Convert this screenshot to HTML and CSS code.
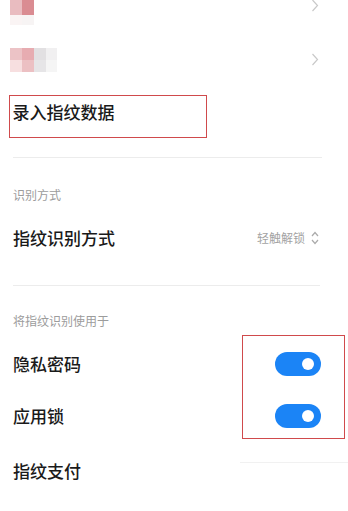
FILE: index.html
```html
<!DOCTYPE html>
<html lang="zh">
<head>
<meta charset="utf-8">
<link rel="stylesheet" href="styles.css">
</head>
<body>
<div class="page">
  <div class="row row--first">
    <div class="mosaic mosaic--a">
      <span class="c a1"></span><span class="c a2"></span>
      <span class="c a3"></span><span class="c a4"></span>
    </div>
    <svg class="chev chev--top" width="8" height="13" viewBox="0 0 8 13"><path d="M1.5 1 L6.5 6.5 L1.5 12" fill="none" stroke="#c9c9c9" stroke-width="1.2"/></svg>
  </div>
  <div class="row row--blur">
    <div class="mosaic mosaic--b">
      <span class="c b1"></span><span class="c b2"></span><span class="c b3"></span><span class="c b4"></span>
      <span class="c b5"></span><span class="c b6"></span><span class="c b7"></span><span class="c b8"></span>
    </div>
    <svg class="chev" width="8" height="13" viewBox="0 0 8 13"><path d="M1.5 1 L6.5 6.5 L1.5 12" fill="none" stroke="#c9c9c9" stroke-width="1.2"/></svg>
  </div>

  <div class="marked">
    <span class="title">录入指纹数据</span>
  </div>

  <div class="divider divider--one"></div>

  <div class="section-head section-head--one">识别方式</div>
  <div class="row row--item">
    <span class="title">指纹识别方式</span>
    <span class="value">
      <span class="value-text">轻触解锁</span>
      <svg class="updown" width="8" height="16" viewBox="0 0 8 16"><path d="M1 6 L4 2.5 L7 6 M1 10 L4 13.5 L7 10" fill="none" stroke="#ababab" stroke-width="1.2"/></svg>
    </span>
  </div>

  <div class="divider divider--two"></div>

  <div class="section-head section-head--two">将指纹识别使用于</div>
  <div class="row row--item row--toggle1">
    <span class="title">隐私密码</span>
    <span class="switch"><span class="knob"></span></span>
  </div>
  <div class="row row--item row--toggle2">
    <span class="title">应用锁</span>
    <span class="switch"><span class="knob"></span></span>
  </div>
  <div class="divider divider--partial"></div>
  <div class="row row--last">
    <span class="title">指纹支付</span>
  </div>

  <div class="annot"></div>
</div>
</body>
</html>
```

FILE: styles.css
```css
* { box-sizing: border-box; }
html, body { margin: 0; padding: 0; background: #ffffff; }
body {
  font-family: "Noto Sans CJK SC", "Noto Sans", sans-serif;
  color: #1a1a1a;
  overflow: hidden;
}
.page {
  position: relative;
  width: 348px;
  height: 511px;
  display: flex;
  flex-direction: column;
}
.row {
  display: flex;
  align-items: center;
  justify-content: space-between;
  padding: 0 27px 0 13px;
}
.row--first {
  height: 33px;
  align-items: flex-start;
  padding-left: 10px;
  padding-right: 29px;
}
.row--blur {
  height: 52px;
  padding-left: 10px;
  padding-right: 29px;
}
.chev--top { margin-top: -1px; }
.mosaic {
  display: grid;
  filter: blur(0.7px);
}
.mosaic--a {
  grid-template-columns: 12px 12px;
  grid-template-rows: 15px 10px;
}
.mosaic--b {
  grid-template-columns: 12px 12px 12px 11px;
  grid-template-rows: 12px 12px;
  margin-top: 2px;
}
.a1 { background: #e9bcc0; }
.a2 { background: #da8c92; }
.a3 { background: #faf4f4; }
.a4 { background: #f7f4f4; }
.b1 { background: #ecc3c6; }
.b2 { background: #e7acb1; }
.b3 { background: #e2e0e2; }
.b4 { background: #f1f0f1; }
.b5 { background: #f7dfe0; }
.b6 { background: #ecc0c3; }
.b7 { background: #e6e5e7; }
.b8 { background: #f5f5f5; }

.title {
  font-size: 17px;
  font-weight: 500;
  line-height: 24px;
  color: #1a1a1a;
  white-space: nowrap;
}
.marked {
  margin: 10px 0 0 9px;
  width: 198px;
  height: 43px;
  border: 1.5px solid #d04a4c;
  padding: 4px 0 0 2.5px;
}
.divider {
  height: 1px;
  background: #ececec;
}
.divider--one { margin: 19px 0 0 13px; width: 309px; }
.divider--two { margin: 21px 0 0 13px; width: 307px; }
.divider--partial { margin: 20px 0 0 240px; width: 108px; background: #f1f1f1; }

.section-head {
  height: 24px;
  line-height: 24px;
  font-size: 12px;
  color: #9c9c9c;
  padding-left: 13px;
}
.section-head--one { margin-top: 25px; }
.section-head--two { margin-top: 23px; }

.row--item { height: 52px; margin-top: 5px; }
.row--toggle2 { margin-top: 0; }

.value {
  display: flex;
  align-items: center;
  margin-right: 2px;
}
.value-text {
  font-size: 12px;
  color: #a3a3a3;
  line-height: 16px;
}
.updown { margin-left: 6px; }

.switch {
  width: 46px;
  height: 24px;
  border-radius: 12px;
  background: #1b84f6;
  display: flex;
  align-items: center;
  justify-content: flex-end;
  padding-right: 7px;
  margin-right: 0;
}
.knob {
  width: 12px;
  height: 12px;
  border-radius: 50%;
  background: #ffffff;
}
.row--last {
  height: 30px;
  align-items: flex-start;
}
.row--last .title { line-height: 16px; }

.annot {
  position: absolute;
  left: 242px;
  top: 335px;
  width: 103px;
  height: 104px;
  border: 1.5px solid #d04a4c;
}
```
